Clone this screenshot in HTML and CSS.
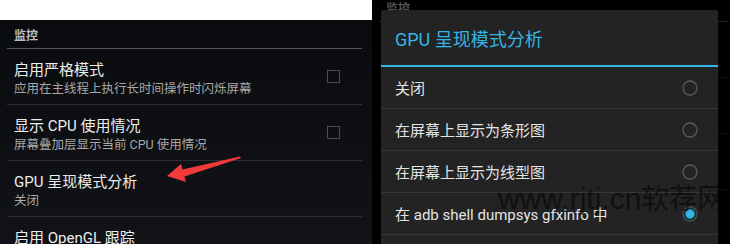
FILE: index.html
```html
<!DOCTYPE html>
<html lang="zh-CN">
<head>
<meta charset="utf-8">
<title>GPU 呈现模式分析</title>
<link rel="stylesheet" href="styles.css">
</head>
<body>
<div class="page">
  <section class="shot shot-left">
    <div class="list">
      <div class="cat">监控</div>
      <div class="pref">
        <div class="text"><div class="title">启用严格模式</div><div class="summary">应用在主线程上执行长时间操作时闪烁屏幕</div></div>
        <span class="check"></span>
      </div>
      <div class="pref">
        <div class="text"><div class="title">显示 CPU 使用情况</div><div class="summary">屏幕叠加层显示当前 CPU 使用情况</div></div>
        <span class="check"></span>
      </div>
      <div class="pref">
        <div class="text"><div class="title">GPU 呈现模式分析</div><div class="summary">关闭</div></div>
      </div>
      <div class="pref">
        <div class="text"><div class="title">启用 OpenGL 跟踪</div><div class="summary">无</div></div>
      </div>
    </div>
  </section>
  <section class="shot shot-right">
    <div class="list list-dim">
      <div class="cat">监控</div>
      <div class="pref">
        <div class="text"><div class="title">启用严格模式</div><div class="summary">应用在主线程上执行长时间操作时闪烁屏幕</div></div>
        <span class="check"></span>
      </div>
      <div class="pref">
        <div class="text"><div class="title">显示 CPU 使用情况</div><div class="summary">屏幕叠加层显示当前 CPU 使用情况</div></div>
        <span class="check"></span>
      </div>
      <div class="pref">
        <div class="text"><div class="title">GPU 呈现模式分析</div><div class="summary">在 adb shell dumpsys gfxinfo 中</div></div>
      </div>
      <div class="pref">
        <div class="text"><div class="title">启用 OpenGL 跟踪</div><div class="summary">无</div></div>
      </div>
    </div>
    <div class="dialog">
      <div class="dtitle">GPU 呈现模式分析</div>
      <div class="opt"><span>关闭</span><svg class="radio" viewBox="0 0 16 16"><circle cx="8" cy="8" r="7" fill="none" stroke="#5a5a5a" stroke-width="1.3"/></svg></div>
      <div class="opt"><span>在屏幕上显示为条形图</span><svg class="radio" viewBox="0 0 16 16"><circle cx="8" cy="8" r="7" fill="none" stroke="#5a5a5a" stroke-width="1.3"/></svg></div>
      <div class="opt"><span>在屏幕上显示为线型图</span><svg class="radio" viewBox="0 0 16 16"><circle cx="8" cy="8" r="7" fill="none" stroke="#5a5a5a" stroke-width="1.3"/></svg></div>
      <div class="opt"><span>在 adb shell dumpsys gfxinfo 中</span><svg class="radio" viewBox="0 0 16 16"><circle cx="8" cy="8" r="7" fill="#1c2a32" stroke="#46525a" stroke-width="1.3"/><circle cx="8" cy="8" r="4.6" fill="#33b5e5" stroke="#1f6f8f" stroke-width="0.8"/></svg></div>
      <div class="opt"></div>
    </div>
  </section>
  <svg class="arrow" viewBox="0 0 735 244" width="735" height="244">
    <polygon points="167,176 181,164 182.5,169.5 240,156.5 241,158 184.5,176.5 186,182" fill="#f23a3a"/>
  </svg>
  <div class="wm">www.rjtj.cn<span class="wm-cjk">软荐网</span></div>
</div>
</body>
</html>
```

FILE: styles.css
```css
html, body {
  margin: 0;
  padding: 0;
  background: #ffffff;
}

.page {
  position: relative;
  display: flex;
  align-items: flex-start;
  width: 735px;
  height: 244px;
  overflow: hidden;
  font-family: Roboto, "Noto Sans CJK SC", sans-serif;
}

.shot {
  position: relative;
  overflow: hidden;
  flex: none;
}

.shot-left {
  width: 372px;
  height: 224px;
  margin-top: 20px;
  background: linear-gradient(180deg, #0a0b0e 0%, #111318 100%);
}

.shot-right {
  width: 358px;
  height: 244px;
  background: #000000;
}

.list {
  padding: 0 10px 0 7px;
}

.list-dim {
  margin-top: -7px;
  padding: 0 3px 0 7px;
  opacity: 0.42;
}

.cat {
  box-sizing: border-box;
  height: 29px;
  padding: 8px 7px 0;
  font-size: 12px;
  line-height: 16px;
  font-weight: 700;
  color: #bdbdbd;
  border-bottom: 1px solid #555555;
}

.pref {
  box-sizing: border-box;
  height: 56px;
  display: flex;
  align-items: center;
  justify-content: space-between;
  padding: 0 22px 0 7px;
  border-bottom: 1px solid #2c2e32;
}

.text {
  align-self: stretch;
  padding-top: 11px;
}

.title {
  font-size: 15px;
  line-height: 20px;
  color: #ededed;
  white-space: nowrap;
}

.summary {
  font-size: 12.5px;
  line-height: 17px;
  color: #a8a8a8;
  white-space: nowrap;
}

.check {
  box-sizing: border-box;
  width: 13px;
  height: 13px;
  border: 1.5px solid #4a4c50;
  flex: none;
}

.dialog {
  position: absolute;
  left: 9px;
  top: 10px;
  width: 337px;
  height: 260px;
  background: #232323;
  border-radius: 2px;
}

.dtitle {
  box-sizing: border-box;
  height: 57px;
  display: flex;
  align-items: center;
  padding-left: 14px;
  font-size: 18px;
  color: #33b5e5;
  border-bottom: 2px solid #33b5e5;
}

.opt {
  box-sizing: border-box;
  height: 42px;
  display: flex;
  align-items: center;
  justify-content: space-between;
  padding: 0 20px 0 14px;
  font-size: 15px;
  color: #e4e4e4;
  border-bottom: 1px solid #363636;
  white-space: nowrap;
}

.radio {
  width: 16px;
  height: 16px;
  flex: none;
}

.arrow {
  position: absolute;
  left: 0;
  top: 0;
  pointer-events: none;
}

.wm {
  position: absolute;
  left: 498px;
  top: 182px;
  font-family: "Liberation Sans", "Noto Sans CJK SC", sans-serif;
  font-size: 30px;
  line-height: 30px;
  color: rgba(0, 0, 0, 0.55);
  white-space: nowrap;
  pointer-events: none;
}

.wm-cjk {
  font-family: "Noto Sans CJK SC", sans-serif;
  font-size: 28px;
}
```
